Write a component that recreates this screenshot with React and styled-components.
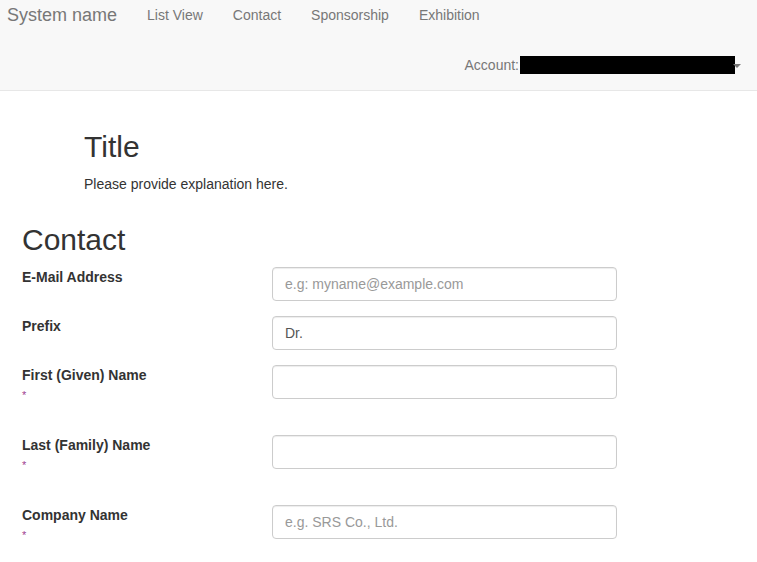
import React from 'react'
import styled, { createGlobalStyle } from 'styled-components';

const GlobalStyle = createGlobalStyle`
body {
  margin: 0;
  background: #ffffff;
  font-family: "Liberation Sans", Arial, sans-serif;
  font-size: 14px;
  line-height: 20px;
  color: #333333;
}
* { box-sizing: border-box; }
`;

const Navbar = styled.nav`
height: 91px;
background-color: #f8f8f8;
border-bottom: 1px solid #e7e7e7;
display: flex;
flex-direction: column;
`;
const NavTop = styled.div`
display: flex;
align-items: center;
height: 30px;
`;
const Brand = styled.a`
font-size: 18px;
line-height: 20px;
color: #777777;
padding: 0 15px 0 7px;
text-decoration: none;
`;
const NavLink = styled.a`
font-size: 14px;
line-height: 20px;
color: #777777;
padding: 0 15px;
text-decoration: none;
`;
const NavBottom = styled.div`
display: flex;
justify-content: flex-end;
align-items: center;
height: 30px;
margin-top: 20px;
padding-right: 16px;
`;
const AccountLabel = styled.span`
font-size: 14px;
color: #777777;
`;
const Redacted = styled.span`
display: inline-block;
width: 215px;
height: 18px;
background: #000000;
margin-left: 1px;
`;
const Caret = styled.span`
display: inline-block;
width: 0;
height: 0;
margin-left: -2px;
margin-top: 2px;
border-top: 4px solid #777777;
border-left: 4px solid transparent;
border-right: 4px solid transparent;
`;

const Intro = styled.div`
padding: 39px 0 0 84px;
`;
const Title = styled.h2`
font-size: 30px;
font-weight: 500;
line-height: 33px;
margin: 0 0 11px 0;
`;
const Explain = styled.p`
margin: 0;
font-size: 14px;
line-height: 20px;
`;

const FormSection = styled.div`
padding: 0 0 0 22px;
`;
const SectionTitle = styled.h2`
font-size: 30px;
font-weight: 500;
line-height: 33px;
margin: 29px 0 11px 0;
`;
const Row = styled.div`
display: grid;
grid-template-columns: 250px 345px;
height: ${p => (p.$required ? '55px' : '34px')};
margin-bottom: 15px;
`;
const LabelCol = styled.div`
display: flex;
flex-direction: column;
`;
const Label = styled.label`
font-weight: 700;
font-size: 14px;
line-height: 20px;
color: #333333;
`;
const Star = styled.span`
font-size: 11px;
line-height: 16px;
margin-top: 2px;
color: #a0408f;
`;
const Input = styled.input`
width: 345px;
height: 34px;
padding: 6px 12px;
font-family: "Liberation Sans", Arial, sans-serif;
font-size: 14px;
color: #555555;
border: 1px solid #cccccc;
border-radius: 4px;
box-shadow: inset 0 1px 1px rgba(0, 0, 0, 0.075);
&::placeholder { color: #999999; }
`;

const fields = [
    { label: 'E-Mail Address', placeholder: 'e.g: myname@example.com' },
    { label: 'Prefix', value: 'Dr.' },
    { label: 'First (Given) Name', required: true },
    { label: 'Last (Family) Name', required: true },
    { label: 'Company Name', placeholder: 'e.g. SRS Co., Ltd.', required: true },
];

function App() {
    return (
        <>
            <GlobalStyle />
            <Navbar>
                <NavTop>
                    <Brand>System name</Brand>
                    <NavLink>List View</NavLink>
                    <NavLink>Contact</NavLink>
                    <NavLink>Sponsorship</NavLink>
                    <NavLink>Exhibition</NavLink>
                </NavTop>
                <NavBottom>
                    <AccountLabel>Account:</AccountLabel>
                    <Redacted />
                    <Caret />
                </NavBottom>
            </Navbar>
            <Intro>
                <Title>Title</Title>
                <Explain>Please provide explanation here.</Explain>
            </Intro>
            <FormSection>
                <SectionTitle>Contact</SectionTitle>
                {fields.map(f => (
                    <Row key={f.label} $required={f.required}>
                        <LabelCol>
                            <Label>{f.label}</Label>
                            {f.required && <Star>*</Star>}
                        </LabelCol>
                        <Input placeholder={f.placeholder} defaultValue={f.value} />
                    </Row>
                ))}
            </FormSection>
        </>
    )
}

export default App
